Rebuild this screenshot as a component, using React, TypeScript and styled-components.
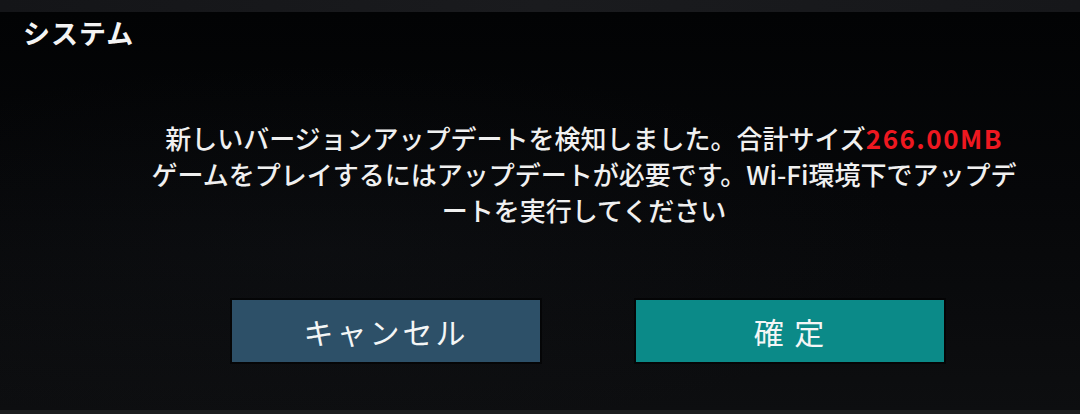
import React from 'react'
import styled, { createGlobalStyle } from 'styled-components'

const GlobalStyle = createGlobalStyle`
  html, body {
    margin: 0;
    padding: 0;
    background: #0a0b0d;
  }
  body {
    font-family: 'Noto Sans CJK JP', 'Noto Sans', sans-serif;
    color: #f2f2f2;
  }
`

const Screen = styled.div`
  width: 1080px;
  height: 414px;
  display: flex;
  flex-direction: column;
  overflow: hidden;
  background: #17181b;
`

const TopBar = styled.div`
  height: 12px;
  flex: none;
  background: linear-gradient(90deg, #141518 0%, #1a1b1e 50%, #16171a 100%);
`

const Panel = styled.div`
  flex: 1;
  display: flex;
  flex-direction: column;
  background:
    radial-gradient(ellipse at 30% 60%, rgba(30, 34, 40, 0.18) 0%, rgba(0, 0, 0, 0) 55%),
    linear-gradient(180deg, #020304 0%, #060709 45%, #0d0e10 100%);
`

const BottomBar = styled.div`
  height: 4px;
  flex: none;
  background: #1c1d20;
`

const Title = styled.h1`
  margin: 0;
  padding: 3px 0 0 23px;
  font-size: 27px;
  line-height: 36px;
  font-weight: 700;
  letter-spacing: 1px;
  color: #f4f4f4;
`

const Body = styled.div`
  display: flex;
  flex-direction: column;
  align-items: center;
  padding-left: 88px;
`

const Message = styled.p`
  margin: 69px 0 0;
  text-align: center;
  font-size: 26px;
  line-height: 36px;
  font-weight: 500;
  color: #f0f0f0;
`

const Line = styled.span`
  display: block;
  white-space: nowrap;
`

const Size = styled.span`
  color: #ee1820;
  font-weight: 700;
  letter-spacing: 1.5px;
`

const Actions = styled.div`
  display: flex;
  gap: 96px;
  margin: 72px 0 0 8px;
`

const Button = styled.button<{ $tone: 'cancel' | 'ok' }>`
  width: 308px;
  height: 62px;
  border: none;
  padding: 0;
  font-family: inherit;
  font-size: 30px;
  font-weight: 400;
  letter-spacing: ${(p) => (p.$tone === 'ok' ? '2px' : '3px')};
  color: #f4f6f6;
  background: ${(p) => (p.$tone === 'ok' ? '#0b8a88' : '#2d5068')};
  box-shadow: 0 0 0 2px rgba(0, 0, 0, 0.55);
`

export default function App() {
  return (
    <>
      <GlobalStyle />
      <Screen>
        <TopBar />
        <Panel>
          <Title>システム</Title>
          <Body>
            <Message>
              <Line>
                新しいバージョンアップデートを検知しました。合計サイズ<Size>266.00MB</Size>
              </Line>
              <Line>ゲームをプレイするにはアップデートが必要です。Wi-Fi環境下でアップデ</Line>
              <Line>ートを実行してください</Line>
            </Message>
            <Actions>
              <Button $tone="cancel">キャンセル</Button>
              <Button $tone="ok">確 定</Button>
            </Actions>
          </Body>
        </Panel>
        <BottomBar />
      </Screen>
    </>
  )
}
